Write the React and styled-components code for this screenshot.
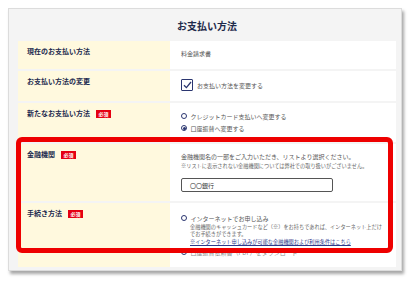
import styled, { createGlobalStyle } from "styled-components";

const GlobalStyle = createGlobalStyle`
  html, body {
    margin: 0;
    padding: 0;
    background: #fff;
  }
  body {
    font-family: "Noto Sans CJK JP", "Noto Sans", sans-serif;
    -webkit-font-smoothing: antialiased;
  }
`;

const Page = styled.div`
  padding: 8px 10px 8px 8px;
`;

const Card = styled.div`
  width: 394px;
  height: 263px;
  background: #f4f4f4;
  border: 1px solid #dcdcdc;
  box-shadow: 2px 3px 3px rgba(0, 0, 0, 0.35);
  padding: 0 5px 0 9px;
  box-sizing: border-box;
`;

const Title = styled.div`
  height: 32px;
  display: flex;
  align-items: center;
  justify-content: center;
  font-size: 10px;
  font-weight: 700;
  color: #1e2a4a;
`;

const Table = styled.div`
  position: relative;
  display: grid;
  grid-template-columns: 152px 1fr;
  grid-template-rows: 28px 30px 39px 57px 64px;
  row-gap: 2px;
`;

const Label = styled.div`
  background: #fff9de;
  padding: 6px 9px 0;
  display: flex;
  align-items: flex-start;
  gap: 6px;
  font-size: 7px;
  line-height: 9px;
  font-weight: 700;
  color: #1d2b4f;
  white-space: nowrap;
`;

const Required = styled.span`
  display: inline-flex;
  align-items: center;
  justify-content: center;
  width: 15px;
  height: 8px;
  margin-top: 0.5px;
  background: #e50012;
  color: #fff;
  font-size: 5px;
  line-height: 8px;
  font-weight: 700;
`;

const Value = styled.div`
  background: #fff;
  padding: ${(p) => p.$top || 8}px 6px 0 11px;
  font-size: 6px;
  line-height: 9px;
  color: #555;
  overflow: hidden;
  white-space: nowrap;
`;

const CheckRow = styled.div`
  display: flex;
  align-items: center;
  gap: 4px;
  height: 12px;
`;

const CheckBox = styled.span`
  width: 12px;
  height: 12px;
  box-sizing: border-box;
  border: 1.2px solid #2b3670;
  border-radius: 1px;
  display: flex;
  align-items: center;
  justify-content: center;
`;

const RadioRow = styled.div`
  display: flex;
  align-items: center;
  gap: 3.5px;
  height: ${(p) => p.$h || 12}px;
  color: ${(p) => (p.$muted ? "#8a8a8a" : "#555")};
`;

const Radio = styled.span`
  width: 6px;
  height: 6px;
  box-sizing: border-box;
  border-radius: 50%;
  border: 1.2px solid #2b3670;
  display: flex;
  align-items: center;
  justify-content: center;
  flex-shrink: 0;
  &::after {
    content: "";
    width: 3px;
    height: 3px;
    border-radius: 50%;
    background: ${(p) => (p.$checked ? "#2b3670" : "transparent")};
  }
`;

const Note = styled.div`
  font-size: 5.2px;
  line-height: ${(p) => p.$lh || 7}px;
  color: #666;
  padding-left: ${(p) => (p.$indent ? 9 : 0)}px;
`;

const Link = styled.a`
  display: block;
  font-size: 5.2px;
  line-height: 8px;
  color: #2d3a8c;
  text-decoration: underline;
  padding-left: 9px;
  margin-top: 1px;
`;

const TextInput = styled.div`
  margin-top: 7px;
  width: 152px;
  height: 14px;
  box-sizing: border-box;
  border: 1px solid #555;
  border-radius: 2px;
  padding-left: 8px;
  display: flex;
  align-items: center;
  font-size: 6px;
  color: #333;
`;

const Highlight = styled.div`
  position: absolute;
  left: -2px;
  top: 96px;
  width: 377px;
  height: 116px;
  box-sizing: border-box;
  border: 5px solid #ee0000;
  border-radius: 6px;
  pointer-events: none;
`;

export default function App() {
  return (
    <Page>
      <GlobalStyle />
      <Card>
        <Title>お支払い方法</Title>
        <Table>
          <Label>現在のお支払い方法</Label>
          <Value>料金請求書</Value>

          <Label>お支払い方法の変更</Label>
          <Value>
            <CheckRow>
              <CheckBox>
                <svg width="9" height="8" viewBox="0 0 9 8">
                  <path d="M1 4.2 L3.4 6.6 L8 1" fill="none" stroke="#2b3670" strokeWidth="1.3" />
                </svg>
              </CheckBox>
              お支払い方法を変更する
            </CheckRow>
          </Value>

          <Label>
            新たなお支払い方法<Required>必須</Required>
          </Label>
          <Value $top={7}>
            <RadioRow>
              <Radio />
              クレジットカード支払いへ変更する
            </RadioRow>
            <RadioRow>
              <Radio $checked />
              口座振替へ変更する
            </RadioRow>
          </Value>

          <Label>
            金融機関<Required>必須</Required>
          </Label>
          <Value>
            <div>金融機関名の一部をご入力いただき、リストより選択ください。</div>
            <Note $lh={10}>※リストに表示されない金融機関については弊社での取り扱いがございません。</Note>
            <TextInput>〇〇銀行</TextInput>
          </Value>

          <Label>
            手続き方法<Required>必須</Required>
          </Label>
          <Value $top={10}>
            <RadioRow $h={10}>
              <Radio />
              インターネットでお申し込み
            </RadioRow>
            <Note $indent>金融機関のキャッシュカードなど（※）をお持ちであれば、インターネット上だけ</Note>
            <Note $indent>でお手続きができます。</Note>
            <Link>※インターネット申し込みが可能な金融機関および利用条件はこちら</Link>
            <RadioRow $h={12} $muted>
              <Radio />
              口座振替依頼書（PDF）をダウンロード
            </RadioRow>
          </Value>

          <Highlight />
        </Table>
      </Card>
    </Page>
  );
}
